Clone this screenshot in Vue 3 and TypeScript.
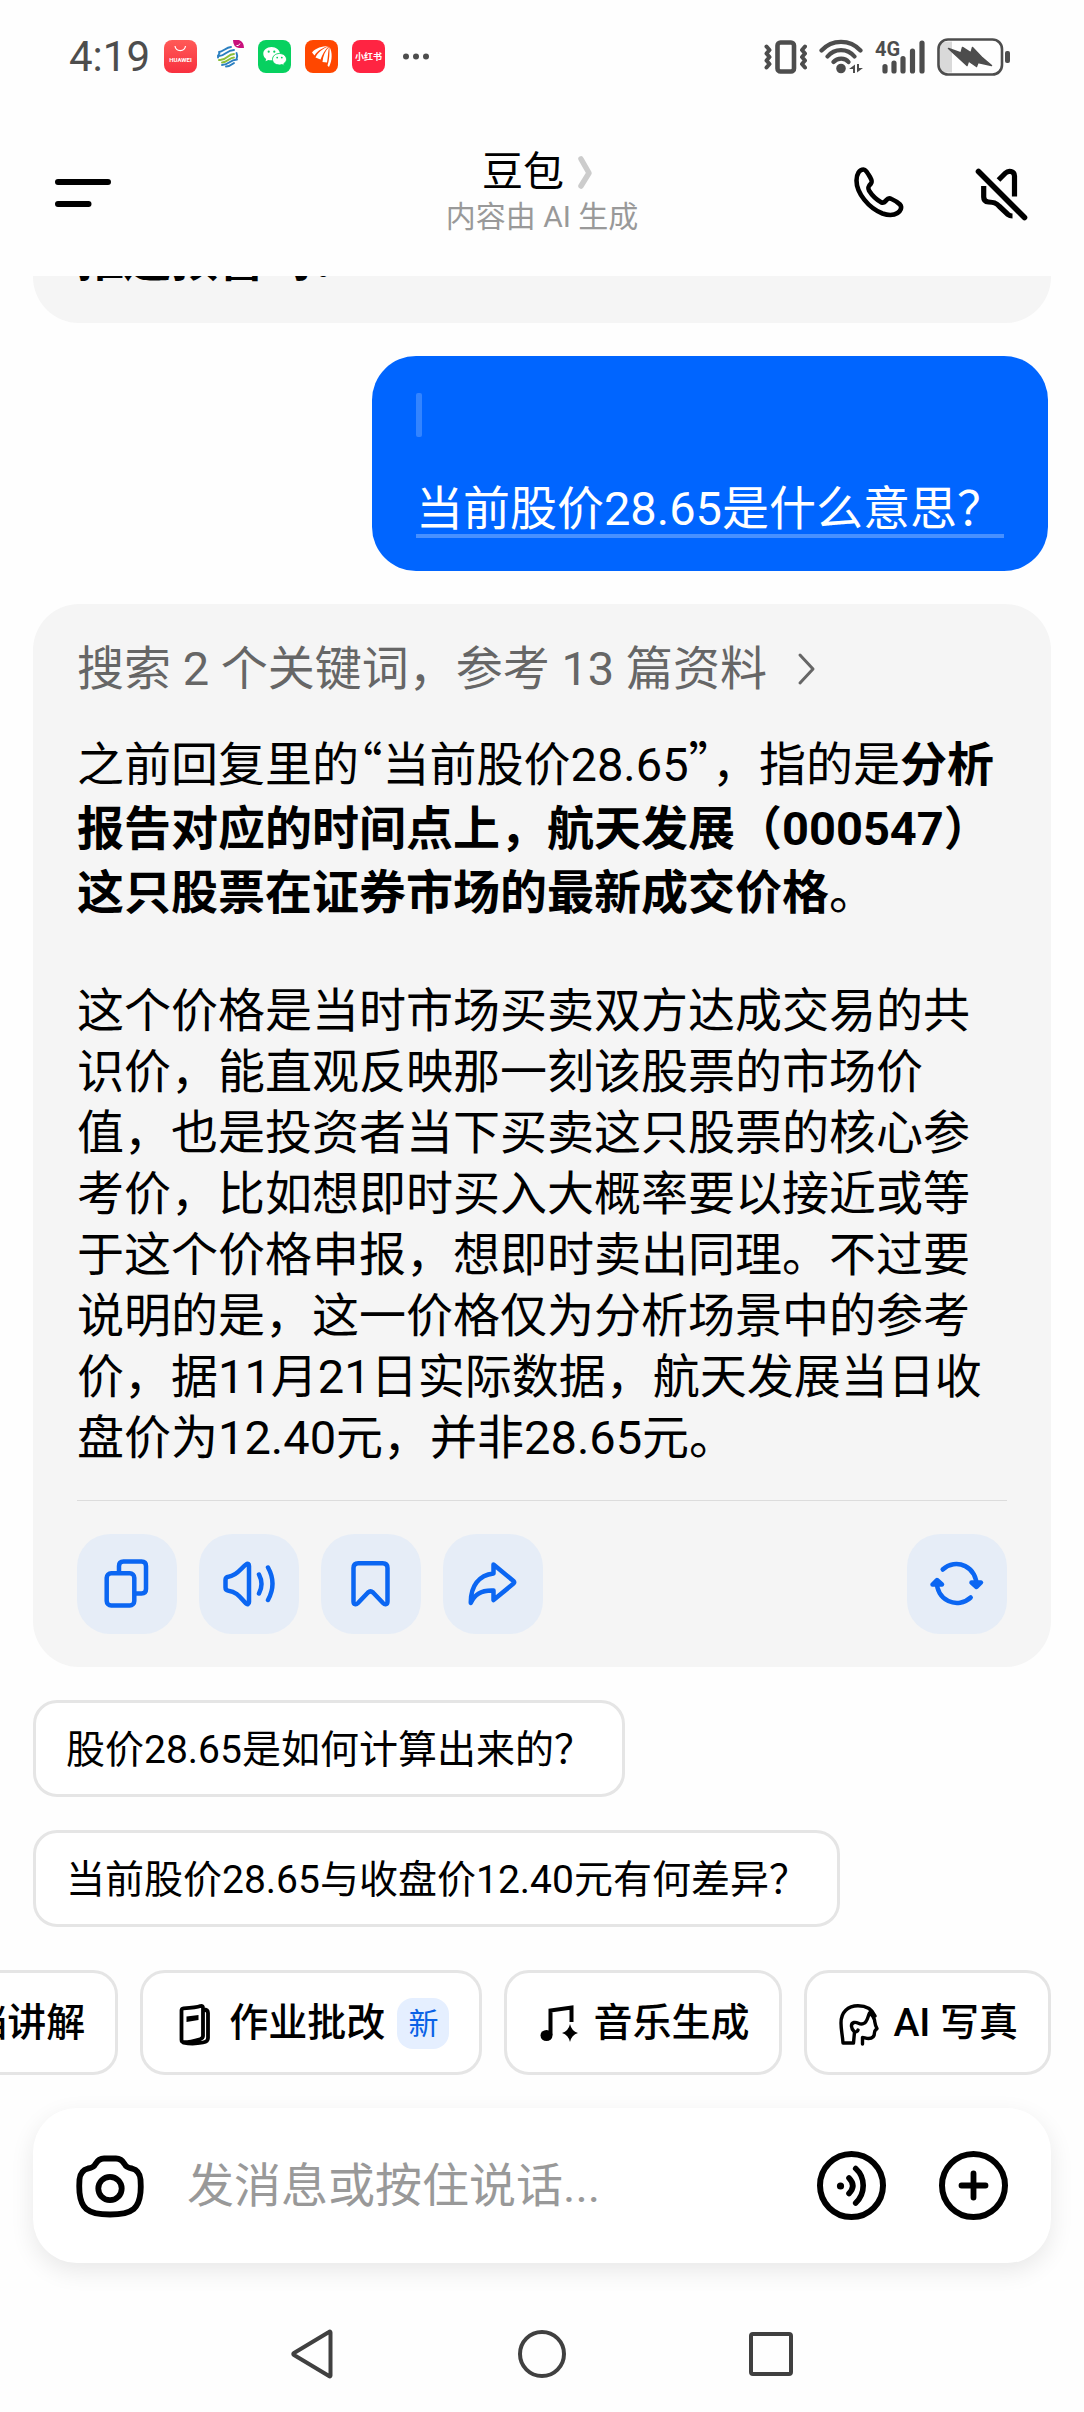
<script setup lang="ts">
import { ref } from 'vue'

interface Tool {
  id: string
  label: string
  badge?: string
}

const draft = ref('')

const suggestions: string[] = [
  '股价28.65是如何计算出来的？',
  '当前股价28.65与收盘价12.40元有何差异？',
]

const tools: Tool[] = [
  { id: 'doc', label: '文档讲解' },
  { id: 'homework', label: '作业批改', badge: '新' },
  { id: 'music', label: '音乐生成' },
  { id: 'photo', label: 'AI 写真' },
]
</script>

<template>
  <div class="screen">
    <div class="status">
      <div class="status-left">
        <span class="time">4:19</span>
        <svg class="app-icon" viewBox="0 0 33 33" aria-hidden="true">
          <defs>
            <linearGradient id="hw" x1="0" y1="0" x2="0" y2="1">
              <stop offset="0" stop-color="#ff5a57" />
              <stop offset="1" stop-color="#f8303f" />
            </linearGradient>
          </defs>
          <rect width="33" height="33" rx="8" fill="url(#hw)" />
          <path d="M11 6a5.300 5.300 0 0 0 10.500 0" fill="none" stroke="#fff" stroke-width="1.200" />
          <text x="16.500" y="21.500" class="hw-text" text-anchor="middle">HUAWEI</text>
        </svg>
        <svg class="app-icon" viewBox="0 0 33 33" aria-hidden="true">
          <g fill="none" stroke-width="1.900" stroke-linecap="round">
            <path d="M8 12c4 0 7-5 12-5M7 16c7 1 8-6 16-6" stroke="#2a7fc0" />
            <path d="M8 20c8 1 8-6 15-6M11 22.500c6 0 7-5 12-5" stroke="#8cbf3a" />
            <path d="M7 17.500c0-2 .5-3 1.500-4.500M11 25c7 0 7-5 15-5.500M15 26.500c4 0 6-2 8-3.500M25.500 13c1 2 1 4 0 6" stroke="#2a7fc0" />
          </g>
          <path d="M22 0h6q5 2 5 8h-5q-6-1-6-8z" fill="#c9107c" />
          <path d="M25.500 5.500q2 1 3.500-2" fill="none" stroke="#fff" stroke-width="1" />
        </svg>
        <svg class="app-icon" viewBox="0 0 33 33" aria-hidden="true">
          <rect width="33" height="33" rx="8" fill="#07d160" />
          <path d="M13.500 7C8.800 7 5.300 10 5.300 13.700c0 2.100 1.100 4 2.900 5.200l-.7 2.300 2.800-1.300c1 .3 2.100.4 3.200.4 4.700 0 8.300-2.900 8.300-6.600S18.200 7 13.500 7z" fill="#fff" />
          <path d="M21.500 13.500c-4 0-7 2.500-7 5.800s3 5.700 7 5.700c.9 0 1.700-.1 2.500-.4l2.300 1.200-.6-2c1.700-1.100 2.800-2.700 2.800-4.500 0-3.300-3-5.800-7-5.800z" fill="#fff" stroke="#07d160" stroke-width=".9" />
          <g fill="#07d160">
            <circle cx="10.700" cy="11.700" r="1.100" /><circle cx="16.300" cy="11.700" r="1.100" />
            <circle cx="19.200" cy="17.600" r=".9" /><circle cx="23.800" cy="17.600" r=".9" />
          </g>
        </svg>
        <svg class="app-icon" viewBox="0 0 33 33" aria-hidden="true">
          <rect width="33" height="33" rx="8" fill="#ff4700" />
          <g fill="#fff">
            <path d="M7 12.500C11 7.500 17 6.500 23 6c-5 2-10 4-13.500 9.500z" />
            <path d="M10.500 17.500C13 12 18 8.500 23.500 6.500 20 10 17.500 14 15.500 19.500z" />
            <path d="M17.500 22c.5-6 2.500-11 6.500-15-1 5-1 10-2 15.500z" />
            <path d="M22.500 25.500c2-6 2-12 2-18.500 3 5 3 13-.5 20z" />
          </g>
        </svg>
        <svg class="app-icon" viewBox="0 0 33 33" aria-hidden="true">
          <rect width="33" height="33" rx="8" fill="#ff2442" />
          <text x="16.500" y="20" class="xhs-text" text-anchor="middle">小红书</text>
        </svg>
        <svg class="more-dots" viewBox="0 0 44 34" aria-hidden="true">
          <circle cx="7" cy="16.500" r="3" /><circle cx="17" cy="16.500" r="3" /><circle cx="27" cy="16.500" r="3" />
        </svg>
      </div>
      <div class="status-right">
        <svg width="43" height="34" viewBox="0 0 43 34" aria-hidden="true">
          <rect x="13.500" y="2.500" width="16.500" height="29" rx="3" class="st" stroke-width="4.600" />
          <path d="M2.500 6.500l3 3.500-3 3.500 3 3.500-3 3.500 3 3.500-3 3.500M41 6.500L38 10l3 3.500-3 3.500 3 3.500-3 3.500 3 3.500" class="st" stroke-width="4" />
        </svg>
        <svg width="44" height="37" viewBox="0 0 44 37" aria-hidden="true">
          <path d="M2.500 12.500C13 1 31 1 41.500 12.500M8.500 18.500c7-8.500 20-8.500 27 0M14.500 24c4-4.500 11.500-4.500 15 0" class="st" stroke-width="4.200" />
          <circle cx="22" cy="30.500" r="4.800" fill="#4d4d4d" />
          <path d="M30 31l6-4.500V35h-2v-4zM44 30l-6 4.500V26h2v4z" fill="#4d4d4d" />
        </svg>
        <svg width="50" height="36" viewBox="0 0 50 36" aria-hidden="true">
          <text x="0" y="17" class="net-text">4G</text>
          <path d="M10 27.500V32M19 24v8M28 19.500V32M37.500 12v20M47 4v28" class="st" stroke-width="5.200" />
        </svg>
        <svg width="73" height="38" viewBox="0 0 73 38" aria-hidden="true">
          <path d="M15 3.500h-5a7 7 0 0 0-7 7v17a7 7 0 0 0 7 7h5z" fill="#d9d9d9" />
          <rect x="1.500" y="1.500" width="63.500" height="35" rx="9.500" class="st" stroke-width="2.600" />
          <rect x="68" y="13" width="5" height="12" rx="2" fill="#4d4d4d" />
          <path d="M11.500 10.500L24 15l1.500-5.500L34 15l1.500-5.500 9 9.500 10 8.500L41 24.500l-1.500 4-8-5.500-1.500 4.500z" fill="#4d4d4d" stroke="#4d4d4d" stroke-width="1.500" stroke-linejoin="round" />
        </svg>
      </div>
    </div>

    <header class="topbar">
      <button class="icon-btn" type="button" aria-label="菜单">
        <svg width="60" height="60" viewBox="0 0 60 60">
          <path d="M5 20H55M5 42H35.500" class="ink" stroke-width="6" />
        </svg>
      </button>
      <div class="titles">
        <h1 class="title">
          豆包
          <svg width="28" height="36" viewBox="0 0 28 36" aria-hidden="true">
            <path d="M7 5l8 14-8 13" fill="none" stroke="#ccc" stroke-width="5.500" stroke-linecap="round" stroke-linejoin="round" />
          </svg>
        </h1>
        <p class="subtitle">内容由 AI 生成</p>
      </div>
      <div class="top-actions">
        <button class="icon-btn" type="button" aria-label="通话">
          <svg width="60" height="60" viewBox="0 0 60 60">
            <path d="M7.500 18.500C7.500 12 10.500 7.500 14.500 7.500c2 0 3.500 2.500 6.500 7.500 2 3.500 2.500 5 1 6.500-2.500 2.500-3.500 4-2 7 4 6.500 9 10 12.500 12 2 .5 3.500-.5 5-2.500 1.500-2 3-2 5-1 3.500 1.500 6.500 3.500 8.500 5.500 2.500 3 .5 6.500-2.500 8.500-4.500 3-9.500 2.500-15 .5C19.500 46 7.500 31 7.500 18.500z" class="ink" stroke-width="4.600" />
          </svg>
        </button>
        <button class="icon-btn" type="button" aria-label="静音">
          <svg width="60" height="60" viewBox="0 0 60 60">
            <path d="M7.500 9.500l46 46" class="ink" stroke-width="5.600" />
            <path d="M27.500 18l7-7c3-3 9-2 9 3v20.500M12.700 24v11c0 3 1.800 4.800 4.800 5 5 .3 7.500.5 11 4.500l8.500 8c1.500 1.300 2.500 1.500 4.500 1.500" class="ink butt" stroke-width="5.200" />
          </svg>
        </button>
      </div>
    </header>

    <main class="chat">
      <div class="card previous"><p class="answer strong">推送预警吗？</p></div>

      <div class="bubble">
        <span class="quote-bar"></span>
        <p class="question">当前股价28.65是什么意思？</p>
      </div>

      <article class="card reply">
        <a class="sources" href="#">
          搜索 2 个关键词，参考 13 篇资料
          <svg width="24" height="40" viewBox="0 0 24 40" aria-hidden="true">
            <path d="M5 6l13 14L5 34" fill="none" stroke="#666" stroke-width="3" stroke-linecap="round" stroke-linejoin="round" />
          </svg>
        </a>
        <p class="answer lead">之前回复里的<span class="half">“</span>当前股价28.65<span class="half">”</span>，指的是<strong>分析报告对应的时间点上，航天发展（000547）这只股票在证券市场的最新成交价格</strong>。</p>
        <p class="answer">这个价格是当时市场买卖双方达成交易的共识价，能直观反映那一刻该股票的市场价值，也是投资者当下买卖这只股票的核心参考价，比如想即时买入大概率要以接近或等于这个价格申报，想即时卖出同理。不过要说明的是，这一价格仅为分析场景中的参考价，据11月21日实际数据，航天发展当日收盘价为12.40元，并非28.65元。</p>
        <div class="actions">
          <button type="button" class="action" aria-label="复制">
            <svg viewBox="0 0 56 56">
              <rect x="7.700" y="17.200" width="27.600" height="32.400" rx="4.500" />
              <path d="M20 16v-6q0-4.500 4.500-4.500h18q4.500 0 4.500 4.500v23q0 4.500-4.500 4.500H37" />
            </svg>
          </button>
          <button type="button" class="action" aria-label="朗读">
            <svg viewBox="0 0 56 56">
              <path d="M4.500 24q0-3 3-3.300C16 20 20 12 25 8.500c2-1.500 3-.5 3 1.500v36c0 2-1.500 3-3 1.500-5-5-9-12-17.500-12.800q-3-.4-3-3.200z" />
              <path d="M38 18.500q5 9.500 0 19M47 11.500q9 16 0 32.500" />
            </svg>
          </button>
          <button type="button" class="action" aria-label="收藏">
            <svg viewBox="0 0 56 56">
              <path d="M10.500 12q0-4.800 4.800-4.800h24.400q4.800 0 4.800 4.800v33.500c0 3-2.500 3.500-4.500 1.500L30 36.500q-2.500-2.300-5 0L15 47c-2 2-4.500 1.500-4.500-1.500z" />
            </svg>
          </button>
          <button type="button" class="action" aria-label="分享">
            <svg viewBox="0 0 56 56">
              <path d="M28.500 8.500L48.500 25q1.500 1.300 0 2.600L28.500 44v-9.500C18 34 9.500 38 5.800 47 5.500 30 14 19 28.500 17.500z" />
            </svg>
          </button>
          <button type="button" class="action last" aria-label="重新生成">
            <svg viewBox="0 0 56 56">
              <path d="M13.700 13.500A20 20 0 0 1 47.300 30M41.700 41.500A20 20 0 0 1 8 25.500" />
              <path d="M42.500 26.500l5 4.500 4.500-4.500zM3.500 28.500l4.500-4.500 5 4.500z" fill="currentColor" />
            </svg>
          </button>
        </div>
      </article>

      <button v-for="s in suggestions" :key="s" type="button" class="suggestion">{{ s }}</button>
    </main>

    <div class="tools">
      <button v-for="t in tools" :key="t.id" type="button" class="tool">
        <svg v-if="t.id === 'homework'" viewBox="0 0 44 44" aria-hidden="true">
          <path d="M8.500 8.500q0-2 2-2.200c7-.3 13-.6 17-2.300q2.500-.5 2.500 2v28c0 2-1 2.500-3 3.200-5 1.500-11 3-16 3q-2.500 0-2.500-2.500zM30 7.500q5 0 5 3.500v25c0 3-2 4-5 4.500-6 1.200-13 1.500-19.500.2" class="ink" stroke-width="3.800" />
          <path d="M13.500 14.500l12-1.500v5l-12 2z" fill="#000" />
        </svg>
        <svg v-else-if="t.id === 'music'" viewBox="0 0 44 44" aria-hidden="true">
          <path d="M13.500 33V8.500l21-3V20" fill="none" stroke="#000" stroke-width="4" />
          <ellipse cx="9.500" cy="33.500" rx="6" ry="5.500" fill="#000" />
          <path d="M33 22q1.500 7 8 9-6.500 2-8 9-1.500-7-8-9 6.500-2 8-9z" fill="#000" />
        </svg>
        <svg v-else-if="t.id === 'photo'" viewBox="0 0 44 44" aria-hidden="true">
          <path d="M6 41C5.500 33 4 28 4 21 4 10 11 3.800 21 3.800c8 0 14 3.200 17 10.200M6 41h10.500l1-11c1.500 0 3-.5 3.500-2M17.500 30c-4-4-4-8.500-.5-9.500 4-1 5.500 3 9.500 1 4-1.500 4-6.500 6-10.500 3 2 4.500 4 5 7 .5 3 .5 5 2.500 8.500-1 1.500-2.500 1.500-2.500 4 0 4.500-2.500 6-6 6-2.500 0-4.500-1-6-1v6.500" class="ink" stroke-width="3.400" />
        </svg>
        <span>{{ t.label }}</span>
        <span v-if="t.badge" class="badge">{{ t.badge }}</span>
      </button>
    </div>

    <form class="composer" @submit.prevent>
      <button class="icon-btn" type="button" aria-label="拍照">
        <svg width="68" height="64" viewBox="0 0 68 64">
          <path d="M28 4.500h12c4 0 6.500 2 8.500 5.500 1.500 3 3.500 4 7.500 4.500 5.500 1.500 8 5.500 8.500 11 .3 4 .5 8 0 13C63 53 58 60.500 34 60.500S5 53 3.500 38.500c-.5-5-.3-9 0-13 .5-5.500 3-9.500 8.500-11 4-.5 6-1.500 7.500-4.500C21.500 6.500 24 4.500 28 4.500z" class="ink" stroke-width="5.800" />
          <circle cx="34" cy="34.500" r="11.700" class="ink" stroke-width="5.800" />
        </svg>
      </button>
      <input v-model="draft" class="field" type="text" placeholder="发消息或按住说话..." aria-label="发消息" />
      <button class="icon-btn" type="button" aria-label="语音">
        <svg width="69" height="69" viewBox="0 0 69 69">
          <circle cx="34.500" cy="34.500" r="31.500" class="ink" stroke-width="6" />
          <circle cx="23.500" cy="35" r="3.600" fill="#000" />
          <path d="M32 27q7.500 7.700 0 15.500M38.700 17.500c10 9 10 25 0 34.500" class="ink" stroke-width="5.600" />
        </svg>
      </button>
      <button class="icon-btn" type="button" aria-label="更多">
        <svg width="69" height="69" viewBox="0 0 69 69">
          <circle cx="34.500" cy="34.500" r="31.500" class="ink" stroke-width="6" />
          <path d="M22.500 34.500h24M34.500 22.500v24" class="ink" stroke-width="5.800" />
        </svg>
      </button>
    </form>

    <nav class="sysnav">
      <button class="icon-btn" type="button" aria-label="返回">
        <svg viewBox="0 0 50 50"><path d="M42.500 3.500v43q0 1.500-1.500.5L6 26q-1.500-1 0-2L41 3q1.500-1 1.500.5z" /></svg>
      </button>
      <button class="icon-btn" type="button" aria-label="主页">
        <svg viewBox="0 0 50 50"><circle cx="25" cy="25" r="22" /></svg>
      </button>
      <button class="icon-btn" type="button" aria-label="最近任务">
        <svg viewBox="0 0 50 50"><rect x="5" y="5" width="40" height="40" rx="2" /></svg>
      </button>
    </nav>
  </div>
</template>

<style>
body {
  margin: 0;
  background: #fefefe;
}
</style>

<style scoped>
.screen {
  display: flex;
  flex-direction: column;
  height: 100vh;
  overflow: hidden;
  background: #fefefe;
  color: #000;
  font-family: Roboto, 'Noto Sans CJK SC', sans-serif;
  text-spacing-trim: space-all;
}

p,
h1 {
  margin: 0;
}

button {
  margin: 0;
  padding: 0;
  border: 0;
  background: none;
  color: inherit;
  font: inherit;
}

svg {
  display: block;
  flex: none;
}

.ink {
  fill: none;
  stroke: #000;
  stroke-linecap: round;
  stroke-linejoin: round;
}

.butt {
  stroke-linecap: butt;
}

.st {
  fill: none;
  stroke: #4d4d4d;
  stroke-linecap: round;
  stroke-linejoin: round;
}

.status {
  display: flex;
  flex: none;
  justify-content: space-between;
  align-items: center;
  height: 113px;
  padding: 0 74px 0 69px;
}

.status-left {
  display: flex;
  align-items: center;
  gap: 14px;
}

.status-right {
  display: flex;
  align-items: center;
  gap: 12px;
}

.time {
  color: #4d4d4d;
  font-size: 42px;
  line-height: 48px;
}

.app-icon {
  width: 33px;
  height: 33px;
}

.hw-text {
  fill: #fff;
  font: 700 6px Roboto, sans-serif;
}

.xhs-text {
  fill: #fff;
  font: 700 9px 'Noto Sans CJK SC', sans-serif;
}

.net-text {
  fill: #4d4d4d;
  font: 700 20px Roboto, sans-serif;
}

.more-dots {
  width: 44px;
  height: 34px;
  fill: #4d4d4d;
}

.topbar {
  display: grid;
  flex: none;
  grid-template-columns: 1fr auto 1fr;
  align-items: center;
  height: 158px;
  padding: 0 53px 5px;
}

.icon-btn {
  display: flex;
  flex: none;
}

.titles {
  display: flex;
  flex-direction: column;
  align-items: center;
}

.title {
  display: flex;
  align-items: center;
  gap: 10px;
  font-size: 41px;
  font-weight: 400;
  line-height: 50px;
}

.subtitle {
  color: #999;
  font-size: 30px;
  line-height: 40px;
}

.top-actions {
  display: flex;
  justify-content: flex-end;
  gap: 62px;
}

.chat {
  display: flex;
  flex: 1;
  flex-direction: column;
  justify-content: flex-end;
  align-items: flex-start;
  gap: 33px;
  min-height: 0;
  padding: 0 33px 43px;
  overflow: hidden;
}

.card {
  box-sizing: border-box;
  align-self: stretch;
  flex: none;
  padding: 37px 44px 33px;
  border-radius: 46px;
  background: #f5f5f5;
}

.answer {
  font-size: 47px;
  line-height: 61px;
}

.strong,
.answer strong {
  font-weight: 700;
}

.lead {
  margin: 33px 0 55px;
  line-height: 64px;
}

.half {
  font-family: 'Noto Sans CJK SC', sans-serif;
  font-feature-settings: 'halt';
}

.bubble {
  display: flex;
  flex: none;
  flex-direction: column;
  align-self: flex-end;
  align-items: flex-start;
  gap: 47px;
  margin-right: 3px;
  padding: 37px 44px 33px;
  border-radius: 44px;
  background: #0065ff;
  color: #fff;
}

.quote-bar {
  width: 6px;
  height: 44px;
  border-radius: 2px;
  background: #3384ff;
}

.question {
  border-bottom: 4px solid #4790ff;
  font-size: 47px;
  line-height: 50px;
}

.sources {
  display: flex;
  align-items: center;
  gap: 28px;
  color: #666;
  font-size: 47px;
  line-height: 55px;
  text-decoration: none;
}

.actions {
  display: flex;
  gap: 22px;
  margin-top: 32px;
  padding-top: 33px;
  border-top: 1px solid #dcdcdc;
}

.action {
  display: flex;
  justify-content: center;
  align-items: center;
  width: 100px;
  height: 100px;
  border-radius: 33px;
  background: #e6edf7;
  color: #0b66f2;
}

.action svg {
  width: 56px;
  height: 56px;
  fill: none;
  stroke: currentColor;
  stroke-width: 4.5;
  stroke-linecap: round;
  stroke-linejoin: round;
}

.last {
  margin-left: auto;
}

.suggestion {
  flex: none;
  padding: 22px 29px 18px 30px;
  border: 3px solid #e5e5e5;
  border-radius: 24px;
  background: #fff;
  font-size: 39px;
  line-height: 51px;
}

.tools {
  display: flex;
  flex: none;
  justify-content: flex-end;
  gap: 22px;
  padding: 0 33px;
  overflow: hidden;
}

.tool {
  display: flex;
  flex: none;
  align-items: center;
  gap: 12px;
  padding: 25px 30px 23px;
  border: 3px solid #e5e5e5;
  border-radius: 25px;
  background: #fff;
  font-size: 39px;
  font-weight: 500;
  line-height: 51px;
  white-space: nowrap;
}

.tool svg {
  width: 44px;
  height: 44px;
}

.badge {
  padding: 0 11px;
  border-radius: 16px;
  background: #e5efff;
  color: #0b62e6;
  font-size: 30px;
  font-weight: 400;
}

.composer {
  display: flex;
  flex: none;
  align-items: center;
  gap: 53px;
  height: 155px;
  margin: 33px 33px 0;
  padding: 0 43px;
  box-sizing: border-box;
  border-radius: 44px;
  background: #fff;
  box-shadow: 0 8px 24px rgba(0, 0, 0, 0.09);
}

.field {
  flex: 1;
  min-width: 0;
  margin-left: -10px;
  padding: 0;
  border: 0;
  outline: 0;
  background: none;
  color: #000;
  font: 400 47px/60px Roboto, 'Noto Sans CJK SC', sans-serif;
}

.field::placeholder {
  color: #999;
  opacity: 1;
}

.sysnav {
  display: flex;
  flex: none;
  justify-content: center;
  gap: 179px;
  padding: 66px 0 33px;
}

.sysnav svg {
  width: 50px;
  height: 50px;
  fill: none;
  stroke: #404040;
  stroke-width: 4;
  stroke-linejoin: round;
}
</style>
